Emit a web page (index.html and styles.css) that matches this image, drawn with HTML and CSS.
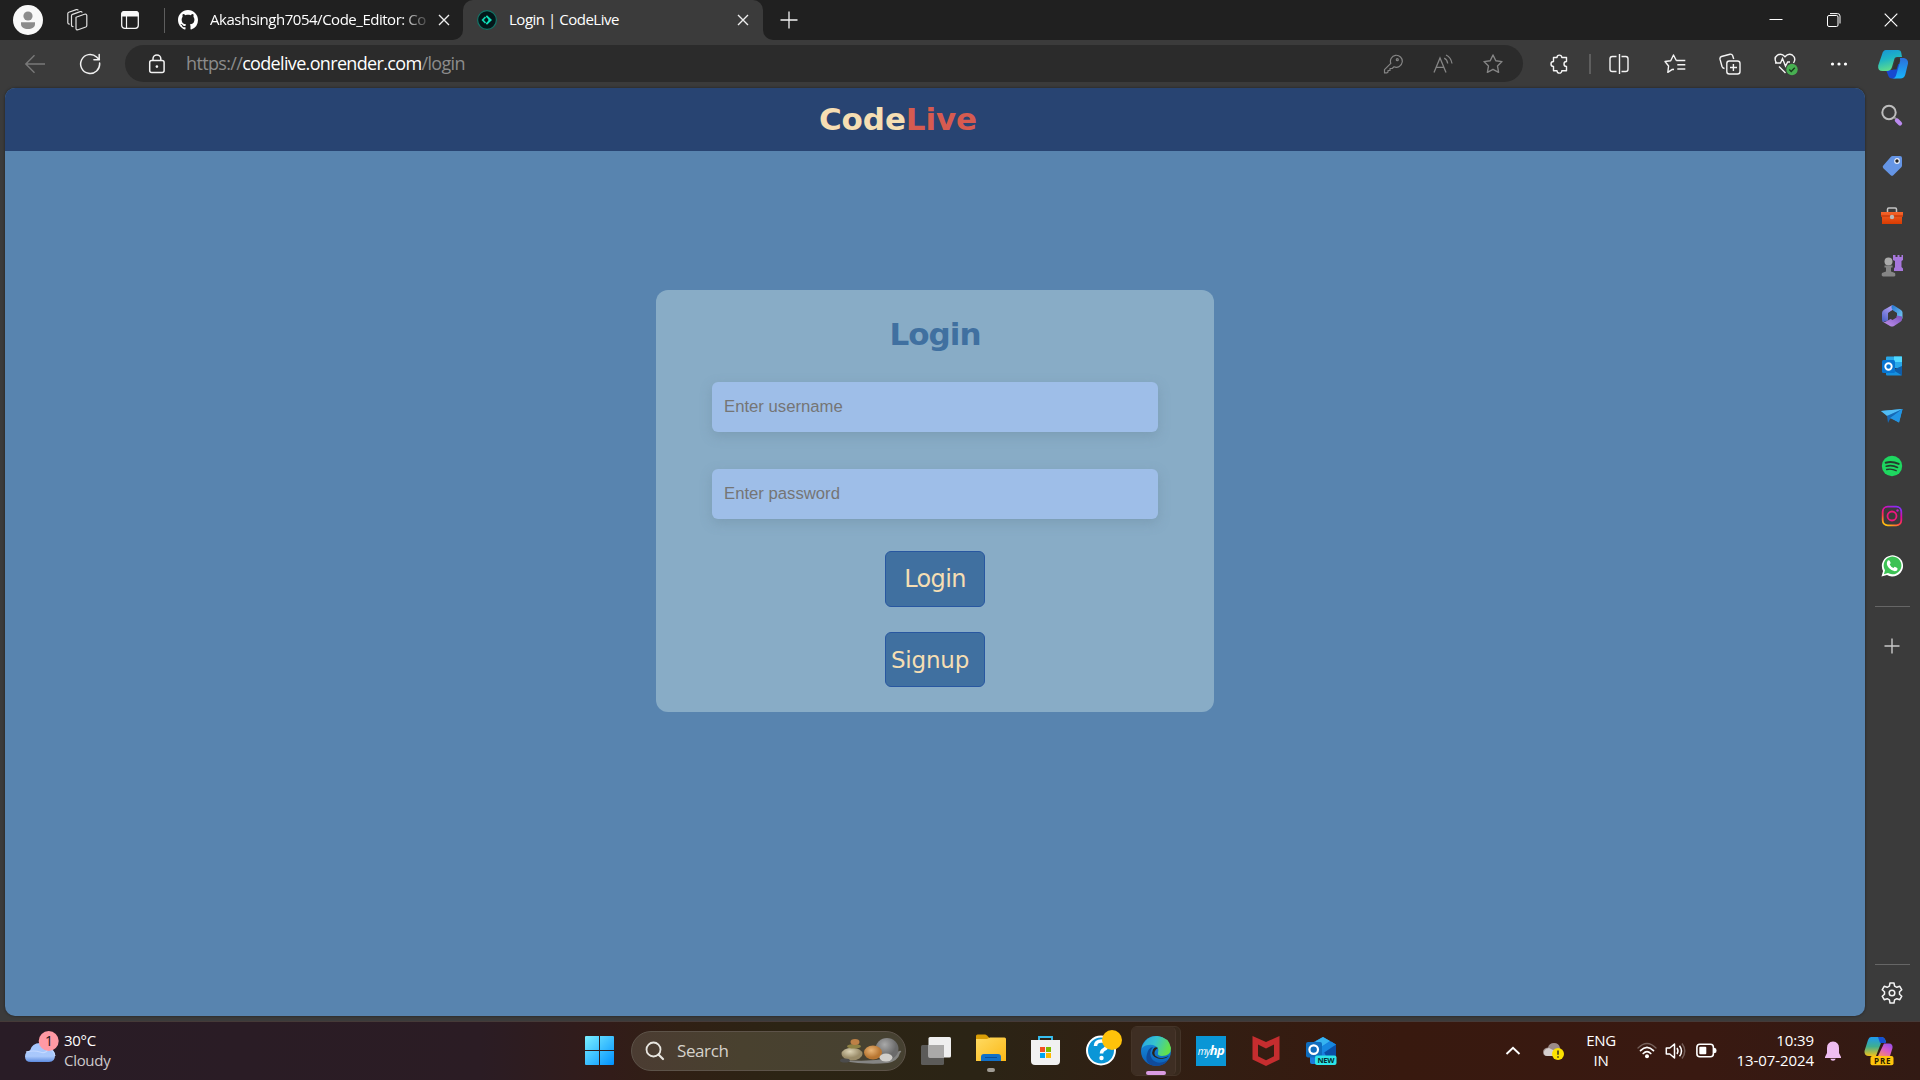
FILE: index.html
```html
<!DOCTYPE html>
<html lang="en">
<head>
<meta charset="utf-8">
<title>Login | CodeLive</title>
<link rel="stylesheet" href="styles.css">
</head>
<body>
<svg class="defs" width="0" height="0">
  <defs>
    <linearGradient id="gTeal" x1="0" y1="0" x2="0.3" y2="1"><stop offset="0" stop-color="#1793d8"/><stop offset=".5" stop-color="#1fb5c4"/><stop offset="1" stop-color="#5fdc8c"/></linearGradient>
    <linearGradient id="gBlue" x1="0" y1="0" x2="0" y2="1"><stop offset="0" stop-color="#2b6fdc"/><stop offset="1" stop-color="#18b4fa"/></linearGradient>
    <linearGradient id="gWin" x1="0" y1="0" x2="1" y2="1"><stop offset="0" stop-color="#7aefff"/><stop offset="1" stop-color="#0091ff"/></linearGradient>
    <linearGradient id="gFolder" x1="0" y1="0" x2="1" y2="1"><stop offset="0" stop-color="#ffdb62"/><stop offset="1" stop-color="#fbb817"/></linearGradient>
    <linearGradient id="gCloud" x1="0" y1="0" x2="0" y2="1"><stop offset="0" stop-color="#a5c6ff"/><stop offset=".7" stop-color="#a9c8fb"/><stop offset="1" stop-color="#5d8be0"/></linearGradient>
    <linearGradient id="gEdge" x1="0" y1="0" x2="1" y2="0.3"><stop offset="0" stop-color="#2aa5e0"/><stop offset=".5" stop-color="#35c3cf"/><stop offset="1" stop-color="#62e04d"/></linearGradient>
    <linearGradient id="gEdgeB" x1="0" y1="0" x2="0" y2="1"><stop offset="0" stop-color="#1a93df"/><stop offset="1" stop-color="#0b5fb9"/></linearGradient>
    <linearGradient id="gInsta" x1="0.2" y1="1" x2="0.7" y2="0"><stop offset="0" stop-color="#ffc20e"/><stop offset=".35" stop-color="#ff3a4a"/><stop offset=".65" stop-color="#e5089c"/><stop offset="1" stop-color="#8a2cf5"/></linearGradient>
    <linearGradient id="gOffA" x1="0.7" y1="0" x2="0.2" y2="1"><stop offset="0" stop-color="#b8a2f6"/><stop offset="1" stop-color="#4c62c6"/></linearGradient>
    <linearGradient id="gOffB" x1="0" y1="0" x2="1" y2="1"><stop offset="0" stop-color="#2372d0"/><stop offset="1" stop-color="#79cdf5"/></linearGradient>
    <linearGradient id="gOffC" x1="0" y1="1" x2="1" y2="0"><stop offset="0" stop-color="#c497f0"/><stop offset="1" stop-color="#7a50bd"/></linearGradient>
    <linearGradient id="gPreA" x1="0" y1="0" x2="0" y2="1"><stop offset="0" stop-color="#1e9af0"/><stop offset=".5" stop-color="#3fae8f"/><stop offset="1" stop-color="#f2c21a"/></linearGradient>
    <linearGradient id="gPreB" x1="0.8" y1="0" x2="0.2" y2="1"><stop offset="0" stop-color="#9a50e8"/><stop offset=".5" stop-color="#d85bc8"/><stop offset="1" stop-color="#f58a6a"/></linearGradient>
    <linearGradient id="gRed" x1="0" y1="0" x2="0" y2="1"><stop offset="0" stop-color="#f5642b"/><stop offset="1" stop-color="#d83b01"/></linearGradient>
    <radialGradient id="gStone" cx=".4" cy=".3"><stop offset="0" stop-color="#dcd3b5"/><stop offset="1" stop-color="#9a8c69"/></radialGradient>
    <radialGradient id="gStoneO" cx=".4" cy=".35"><stop offset="0" stop-color="#e9b474"/><stop offset="1" stop-color="#b87632"/></radialGradient>
    <radialGradient id="gStoneG" cx=".4" cy=".3"><stop offset="0" stop-color="#a9a9a9"/><stop offset="1" stop-color="#6b6b6b"/></radialGradient>
  </defs>
</svg>

<div class="screen">
  <header class="titlebar">
    <div class="tabs-left">
      <svg class="profile" width="32" height="32" viewBox="0 0 32 32"><circle cx="16" cy="16" r="15" fill="#f9f9f9"/><circle cx="16" cy="12" r="4.600" fill="#8c8c8c"/><path d="M9 18.200h14v1.800c0 3.200-3 5-7 5s-7-1.800-7-5z" fill="#8c8c8c"/></svg>
      <svg class="workspaces" width="24" height="24" viewBox="0 0 24 24" fill="none" stroke="#e0e0e0" stroke-width="1.200" stroke-linejoin="round"><path d="M11 9.200l8.500-3q2-.600 2.300 1.200v10.200q0 1-1 1.400l-7.700 2.700q-2 .500-2.100-1.200z"/><path d="M8.500 18.500q-1.800.300-2-1.200V7.800q0-1 1-1.400l7.700-2.800q1.500-.400 2 1"/><path d="M4.800 16q-1.700.300-2-1.200V5.600q0-1 1-1.400l7.500-2.600q1.300-.400 2 .800"/></svg>
      <svg class="tabaction" width="20" height="20" viewBox="0 0 20 20"><rect x="1.700" y="1.700" width="16.600" height="16.600" rx="3" fill="none" stroke="#f4f4f4" stroke-width="1.300"/><path d="M1.200 6.500V4a3 3 0 0 1 3-3h11.600a3 3 0 0 1 3 3v2.500z" fill="#f7f7f7"/><path d="M6.500 6v12" stroke="#f4f4f4" stroke-width="1.200"/></svg>
      <i class="rule"></i>
      <div class="tab">
        <svg width="20" height="20" viewBox="0 0 16 16" fill="#fff"><path d="M8 0C3.580 0 0 3.580 0 8c0 3.540 2.290 6.530 5.470 7.590.400.070.550-.170.550-.380 0-.190-.010-.820-.010-1.490-2.010.370-2.530-.490-2.690-.940-.090-.230-.480-.940-.820-1.130-.280-.150-.680-.520-.010-.530.630-.010 1.080.580 1.230.820.720 1.210 1.870.870 2.330.660.070-.520.280-.870.510-1.070-1.780-.200-3.640-.890-3.640-3.950 0-.870.310-1.590.820-2.150-.080-.200-.360-1.020.080-2.120 0 0 .670-.210 2.200.820.640-.180 1.320-.270 2-.270s1.360.090 2 .270c1.530-1.040 2.200-.820 2.200-.820.440 1.100.160 1.920.080 2.120.510.560.820 1.270.820 2.150 0 3.070-1.870 3.750-3.650 3.950.290.250.540.730.540 1.480 0 1.070-.010 1.930-.010 2.200 0 .210.150.460.550.380A8.010 8.010 0 0 0 16 8c0-4.420-3.580-8-8-8z"/></svg>
        <span class="tab-text faded">Akashsingh7054/Code_Editor: Co</span>
        <svg class="x" width="12" height="12" viewBox="0 0 12 12" stroke="#eee" stroke-width="1.400"><path d="M1 1l10 10M11 1L1 11"/></svg>
      </div>
    </div>
    <div class="active-wrap">
      <div class="tab active">
        <svg width="20" height="20" viewBox="0 0 20 20"><circle cx="10" cy="10" r="9.400" fill="#03171a" stroke="#137467" stroke-width="1.200"/><path d="M8.500 7L5.700 10l2.800 3" fill="none" stroke="#10d3b0" stroke-width="1.800"/><path d="M10 5.300l5 4.700-5 4.700-1.300-1.300L11.300 10.800V9.200L8.700 6.600z" fill="#10e0ba"/></svg>
        <span class="tab-text">Login | CodeLive</span>
        <svg class="x" width="12" height="12" viewBox="0 0 12 12" stroke="#eee" stroke-width="1.400"><path d="M1 1l10 10M11 1L1 11"/></svg>
      </div>
    </div>
    <div class="tabs-right">
      <svg width="18" height="18" viewBox="0 0 18 18" stroke="#f2f2f2" stroke-width="1.300"><path d="M9 .5v17M.5 9h17"/></svg>
      <div class="win-controls">
        <svg width="14" height="14" viewBox="0 0 14 14"><path d="M.5 6.500h13" stroke="#fff"/></svg>
        <svg width="14" height="14" viewBox="0 0 14 14" fill="none" stroke="#fff"><rect x=".5" y="2.500" width="10.500" height="11" rx="1.500"/><path d="M3 .600h7.500a2.500 2.500 0 0 1 2.500 2.500V10.500"/></svg>
        <svg width="14" height="14" viewBox="0 0 14 14"><path d="M.7.700l12.600 12.600M13.300.700L.700 13.300" stroke="#fff" stroke-width="1.200"/></svg>
      </div>
    </div>
  </header>

  <div class="toolbar">
    <svg class="back" width="22" height="20" viewBox="0 0 22 20" fill="none" stroke="#797979" stroke-width="1.400"><path d="M21 10H2M10.500 1.300L1.800 10l8.700 8.700"/></svg>
    <svg class="reload" width="22" height="22" viewBox="0 0 22 22" fill="none" stroke="#f0f0f0" stroke-width="1.500" stroke-linecap="round"><path d="M20.600 10a9.500 9.500 0 1 1-3-6l2.700 2.700M20.200 1.500v5.300h-5.300"/></svg>
    <div class="address">
      <svg class="lock" width="18" height="20" viewBox="0 0 18 20" fill="none" stroke="#f2f2f2" stroke-width="1.500"><rect x="1.700" y="6.600" width="14.400" height="12" rx="2"/><path d="M5 6.500V4.800a3.900 3.900 0 0 1 7.800 0v1.700"/><circle cx="8.900" cy="12.600" r="1.300" fill="#f2f2f2" stroke="none"/></svg>
      <span class="url"><span class="dim">https://</span>codelive.onrender.com<span class="dim">/login</span></span>
      <div class="addr-icons">
        <svg width="20" height="20" viewBox="0 0 20 20" fill="none" stroke="#858585" stroke-width="1.200" stroke-linejoin="round"><path d="M12.500 1.300a6 6 0 1 1-1.500 11.500l-1.800 1.700H7v2H5V18l-1 .9H1.500v-3.200L7.800 9.300A6 6 0 0 1 12.500 1.300z"/><circle cx="14.300" cy="5.700" r="1"/></svg>
        <svg width="20" height="20" viewBox="0 0 20 20" fill="none" stroke="#858585" stroke-width="1.300"><path d="M1 18.500L7 4l6 14.500M3.200 13.300h7.700M11.200 4.200q3 1.500 3.500 5.300M13 1q5 2.300 6 8.500"/></svg>
        <svg width="20" height="20" viewBox="0 0 20 20" fill="none" stroke="#858585" stroke-width="1.400" stroke-linejoin="round"><path d="M10 1l2.800 5.700 6.200.9-4.500 4.400 1.100 6.300L10 15.300l-5.600 3 1.100-6.300L1 7.600l6.200-.900z"/></svg>
      </div>
    </div>
    <div class="tools">
      <svg width="20" height="20" viewBox="0 0 20 20" fill="none" stroke="#f4f4f4" stroke-width="1.400" stroke-linejoin="round"><path d="M4.500 3.500H8a2.400 2.400 0 1 1 4.800 0h4.700v4a2.500 2.500 0 1 0 0 5v4.200h-4.700a2.400 2.400 0 1 1-4.800 0H4.500v-4.200a2.500 2.500 0 1 1 0-5z"/></svg>
      <i class="rule"></i>
      <svg class="split" width="20" height="20" viewBox="0 0 20 20" fill="none" stroke="#f4f4f4" stroke-width="1.400"><path d="M7.500 2.500H3.300q-2.300 0-2.300 2.300v10.400q0 2.300 2.300 2.300h4.200M10.500 0v20M12.500 2.500h4.200q2.300 0 2.300 2.300v10.400q0 2.300-2.300 2.300h-4.200"/></svg>
      <svg width="22" height="20" viewBox="0 0 22 20" fill="none" stroke="#f4f4f4" stroke-width="1.400" stroke-linejoin="round"><path d="M8.300 15.300l-4.500 3 .8-6.300L1 7.500l5.700-.8L9.500 1l2.800 5.500M12.300 6.500h9M13.300 10.800h8M13.300 15h8M10 15.500l-1.700-.200M12.300 6.500h3"/></svg>
      <svg width="22" height="22" viewBox="0 0 22 22" fill="none" stroke="#f4f4f4" stroke-width="1.400"><rect x="7.800" y="8" width="13.200" height="13" rx="2.500"/><path d="M14.400 11v7M11 14.500h7M5.500 15.500q-1.800-.200-2.500-2L1 6.200q-.300-2 1.500-2.700l8.500-2.300q2-.300 2.700 1.500l1 3.300"/></svg>
      <svg width="24" height="24" viewBox="0 0 24 24" fill="none" stroke="#f4f4f4" stroke-width="1.400"><path d="M2.500 11Q-.700 6 3.500 3.200 7.500.800 11 4.700q3.500-3.900 7.500-1.500 4 2.900 1 7.800M1 11h5.500l2-4.500 3 7.500 2.200-4H16M5 14.500l6.500 6.500"/><circle cx="18" cy="17.500" r="5.700" fill="#48b052" stroke="none"/><path d="M15.300 17.600l1.900 1.900 3.600-3.800" stroke="#173d1b"/></svg>
      <svg class="dots" width="18" height="6" viewBox="0 0 18 6" fill="#fff"><circle cx="2.500" cy="3" r="1.600"/><circle cx="9" cy="3" r="1.600"/><circle cx="15.500" cy="3" r="1.600"/></svg>
      <svg class="copilot" width="32" height="30" viewBox="0 0 32 30"><path d="M9 21h7l2-6h7l-3 10q-1 4.500-4 4.500h-3q-3 0-4-3.500z" fill="#1749cf"/><path d="M9 1h12q3 0 3.300 3l.7 4h-5q-2 0-2.500 1.500L15 18q-1.200 4-5 4H5.500q-5 0-4.300-5.500L5 5.500Q6 1 9 1z" fill="url(#gTeal)"/><path d="M23 9h4q4.500 1 4 5.500l-2.700 11q-1 4-5 4H15q3 0 4-3l3.200-11Q23.700 11.500 23 9z" fill="url(#gBlue)"/><path d="M19 9.500h4l-3.500 11h-4z" fill="#333"/></svg>
    </div>
  </div>

  <div class="browser-body">
    <main class="page">
      <nav class="brand"><span>Code</span><span class="live">Live</span></nav>
      <section class="stage">
        <form class="card">
          <h1>Login</h1>
          <input type="text" placeholder="Enter username">
          <input type="password" placeholder="Enter password">
          <button type="button" class="login">Login</button>
          <button type="button" class="signup">Signup</button>
        </form>
      </section>
    </main>
    <aside class="sidebar">
      <div class="apps">
        <svg viewBox="0 0 24 24"><path d="M14.500 13.500l3 3" stroke="#888" stroke-width="2"/><path d="M17 16.500l3 3" stroke="#bb8af0" stroke-width="4.300" stroke-linecap="round"/><circle cx="9" cy="8.500" r="6.700" fill="none" stroke="#bdbdbd" stroke-width="2"/></svg>
        <svg viewBox="0 0 24 24"><path d="M12.500 2H20q2 0 2 2v7.500q0 1-.700 1.700l-8 8q-1.300 1.300-2.600 0l-7.400-7q-1.300-1.300 0-2.600L10.700 3q.8-1 1.800-1z" fill="#6595e5"/><circle cx="17" cy="7" r="2.300" fill="#222" stroke="#e8eefb" stroke-width="1.200"/></svg>
        <svg viewBox="0 0 24 24"><path d="M7.500 8V5.200q0-1.200 1.200-1.200h6.600q1.200 0 1.200 1.200V8" fill="none" stroke="#c4c4c4" stroke-width="1.500"/><path d="M1 8h22v4.500l-1 .5v7H2v-7l-1-.500z" fill="url(#gRed)"/><path d="M1 12h22" stroke="#b63007"/><circle cx="12" cy="13" r="2.200" fill="#bababa"/></svg>
        <svg viewBox="0 0 24 24"><path d="M13 1h2.500v2h2V1h2v2h2V1H23v5l-1.500 1V13l1.500 1.500V17h-9v-2.500l1-1.500V7L13 6z" fill="#a777dc"/><circle cx="8.500" cy="7.500" r="4" fill="#aaa"/><path d="M4.500 11.500h8v2H11v4l4 1.500q1 3.500-1 3.500H3q-2-.500-1-3.500l4-1.500v-4H4.500z" fill="#858585"/></svg>
        <svg viewBox="0 0 24 24"><path d="M12.500 1L4 5.700Q2 7 2 9v6.500q0 2 1 2.500l5-1.500V9l6-4z" fill="url(#gOffA)"/><path d="M12.500 1q-1.500 1-1 3 .5 2 3 3.500L17 9v3l5 3q.5-.5.5-1.500V8.500q0-1.500-1.500-2.500L14 1.500q-.7-.5-1.500-.5z" fill="url(#gOffB)"/><path d="M2.500 17q1 1.500 3 .8L17 11.500l5 1v3q0 1.500-1.500 2.300L14 22q-2 1-4 0l-6-3.500q-1.300-.700-1.500-1.500z" fill="url(#gOffC)"/><path d="M9 8.500L12.500 6.500 16.500 9v4.500L12.500 16 9 14z" fill="#3b3b3b"/></svg>
        <svg viewBox="0 0 24 24"><path d="M7 2.500h14q1 0 1 1V14H6V3.500q0-1 1-1z" fill="#28a8ea"/><path d="M14 2.500h8V8h-8z" fill="#50d9ff"/><path d="M6 12l8 4 8-4v8.500q0 1-1 1H7q-1 0-1-1z" fill="#1490df"/><path d="M22 12v9.500L13 16z" fill="#0f5da8"/><rect x="2" y="6" width="13" height="13" rx="1.500" fill="#0875d1"/><circle cx="8.500" cy="12.500" r="3.200" fill="none" stroke="#fff" stroke-width="1.900"/></svg>
        <svg viewBox="0 0 24 24"><path d="M1 7l21.500-2L19 18.500 11.500 14z" fill="#2ba2ea"/><path d="M1 7l21.500-2L7 12z" fill="#51bdf5"/><path d="M7 12l15.500-7L10 15l-2 4z" fill="#1769b5"/><path d="M10 14l12.500-9L19 18.500z" fill="#2295e5"/></svg>
        <svg viewBox="0 0 24 24"><circle cx="12" cy="12" r="10.200" fill="#1ed760"/><g fill="none" stroke="#263b2d" stroke-linecap="round"><path d="M5.700 8.700q6.500-1.800 13 1.200" stroke-width="2"/><path d="M6.300 12.200q6-1.500 11.200 1.200" stroke-width="1.700"/><path d="M6.700 15.500q5-1.200 9.500 1.200" stroke-width="1.400"/></g></svg>
        <svg viewBox="0 0 24 24"><rect x="2.700" y="2.700" width="18.600" height="18.600" rx="5" fill="none" stroke="url(#gInsta)" stroke-width="1.800"/><circle cx="12" cy="12" r="4.500" fill="none" stroke="#f0177d" stroke-width="1.800"/><circle cx="17.500" cy="6.500" r="1.200" fill="#c41cc9"/></svg>
        <svg viewBox="0 0 24 24"><path d="M1.500 22.500l1.600-5.600A10.600 10.600 0 1 1 7 21z" fill="#fff"/><path d="M3.900 20.200l1.100-4A8.900 8.900 0 1 1 8 19.100z" fill="#3cc254"/><path d="M7.800 6.500q1.200-.800 1.900.3l.9 2q.200.600-.900 1.700 1.300 2.600 3.800 3.600l1.200-1.400 2.600 1.200q.8 2.300-1.700 3.200-3.200.5-6.700-3.100-3.500-3.900-1.100-7.500z" fill="#fff"/></svg>
      </div>
      <i class="side-rule"></i>
      <svg class="add" width="16" height="16" viewBox="0 0 16 16"><path d="M8 .5v15M.5 8h15" stroke="#c9c9c9" stroke-width="1.400"/></svg>
      <i class="side-rule bottom"></i>
      <svg class="gear" width="22" height="22" viewBox="0 0 22 22" fill="none" stroke="#f4f4f4" stroke-width="1.500" stroke-linejoin="round"><path d="M9 1h4l.6 3.100 2.200 1.200 3-1 2 3.500-2.300 2v2.400l2.300 2-2 3.500-3-1-2.200 1.200L13 21H9l-.6-3.100-2.200-1.200-3 1-2-3.500 2.300-2V9.800l-2.300-2 2-3.500 3 1 2.200-1.200z"/><circle cx="11" cy="11" r="2.800"/></svg>
    </aside>
  </div>

  <footer class="taskbar">
    <div class="weather">
      <svg width="36" height="34" viewBox="0 0 36 34"><path d="M8 32q-6 0-6-5.500 0-5 5-6Q9 13 17 13q6 0 9 5 6 1.500 6 7.500 0 6.500-6 6.500z" fill="url(#gCloud)"/><path d="M3 22q8-2 14 0t8-3q6 1 7 7" fill="none" stroke="#c4d9ff" stroke-width="1.200"/><circle cx="25.700" cy="11" r="10" fill="#ff99a4"/><text x="22" y="16" font-family="Open Sans" font-size="14" fill="#1c1418">1</text></svg>
      <div class="weather-text"><span>30°C</span><span class="soft">Cloudy</span></div>
    </div>

    <div class="center">
      <svg width="29" height="29" viewBox="0 0 29 29"><path d="M0 1q0-1 1-1h13v14H0zM15 0h13q1 0 1 1v13H15zM0 15h14v14H1q-1 0-1-1zM15 15h14v13q0 1-1 1H15z" fill="url(#gWin)"/></svg>
      <div class="search">
        <svg width="20" height="20" viewBox="0 0 20 20" fill="none" stroke="#e8e6e0"><circle cx="8.500" cy="8.500" r="7" stroke-width="1.800"/><path d="M13.500 13.500l4.500 4.500" stroke-width="2.200" stroke-linecap="round"/></svg>
        <span>Search</span>
        <svg class="stones" width="62" height="28" viewBox="0 0 62 28"><path d="M2 22.500q24 3 48-1.500l9-7q4-1 1 2-2 8-12 10-22 2-46-2z" fill="#858583"/><ellipse cx="47" cy="12" rx="11.500" ry="11" fill="url(#gStoneG)"/><ellipse cx="12" cy="17" rx="10.500" ry="6.300" fill="url(#gStone)"/><ellipse cx="14" cy="9.300" rx="7" ry="2.300" fill="#8e8144"/><ellipse cx="15" cy="5" rx="4.500" ry="3" fill="#bd8046"/><ellipse cx="33" cy="15.500" rx="9" ry="7" fill="url(#gStoneO)"/><ellipse cx="46" cy="20.500" rx="6.500" ry="4" fill="#d1cfcb"/><ellipse cx="5" cy="23.500" rx="5" ry="2" fill="#4c4c4c"/></svg>
      </div>
      <svg class="taskview" width="30" height="28" viewBox="0 0 30 28"><rect x="0" y="8" width="23" height="20" rx="1.500" fill="#5c5b59"/><rect x="7.500" y="0" width="22.500" height="20.500" rx="1.500" fill="#efefef"/><path d="M7.500 8H23v12.500H7.500z" fill="#aaa9a8"/></svg>
      <svg class="explorer" width="30" height="40" viewBox="0 0 30 40"><path d="M0 2q0-1.500 1.500-1.500H9q1 0 2 1l2.500 2.500v4H0z" fill="#d99e06"/><path d="M0 5h11l3-1.500h14.500Q30 3.500 30 5v22H0z" fill="url(#gFolder)"/><path d="M5 27v-4q0-3 3-3h14q3 0 3 3v4z" fill="#1170c8"/><path d="M9 23.500h12" stroke="#0b4d97"/><rect x="11" y="34" width="8" height="4" rx="2" fill="#a09c94"/></svg>
      <svg class="store" width="29" height="29" viewBox="0 0 29 29"><path d="M8 6V1h13v5" fill="none" stroke="#37bff0" stroke-width="1.900"/><path d="M0 4h29v21q0 4-4 4H4q-4 0-4-4z" fill="#f1f1f1"/><path d="M9 11h5v5H9z" fill="#f25022"/><path d="M15 11h5v5h-5z" fill="#7fba00"/><path d="M9 17h5v5H9z" fill="#00a4ef"/><path d="M15 17h5v5h-5z" fill="#ffb900"/></svg>
      <svg class="help" width="36" height="36" viewBox="0 0 36 36"><circle cx="15" cy="20.500" r="14" fill="#0a96d7" stroke="#fff" stroke-width="2"/><path d="M9.500 16q.2-5 5.700-5 5.800 0 5.800 4.500 0 2.500-3 4-2.500 1.300-2.500 4" fill="none" stroke="#fff" stroke-width="3.500"/><circle cx="15.500" cy="28" r="2.200" fill="#fff"/><circle cx="26" cy="10" r="10" fill="#ffc20a"/></svg>
      <div class="edge-stack"><div class="edge">
        <svg width="30" height="30" viewBox="0 0 30 30"><circle cx="15" cy="15" r="15" fill="url(#gEdgeB)"/><path d="M1 11Q5 0 16 0q12 1 14 12 0 8-9 8-5-.5-4-3 2-6-5-8Q5 8 1 12z" fill="url(#gEdge)"/><path d="M12 11q-5 6-1 12 6 7 16 1-4 6-12 6Q3 29 6 18q1-6 6-7z" fill="#104b9b"/><path d="M17 12q-5 3-3 7.500 5 5 14 .5-4 4-11 2.500Q9 20 12 13.500q2-3.500 5-1.500z" fill="#2b2115"/></svg>
        <i></i>
      </div></div>
      <div class="hp">my<b>hp</b></div>
      <svg class="mcafee" width="28" height="30" viewBox="0 0 28 30"><path d="M.500 0L14 6 27.500 0v23.500L14 30 .500 23.500zM6 8.500v11.700l8 4 8-4V8.500l-8 4z" fill="#c52d2f" fill-rule="evenodd"/></svg>
      <svg class="outlook" width="32" height="30" viewBox="0 0 32 30"><path d="M4 8L17 1l13 7.500V26q0 2-2 2H6q-2 0-2-2z" fill="#1b7cdd"/><path d="M10 5l7-4 7 4-12 8-6 2z" fill="#35b3f0"/><path d="M17 14L30 8.500V20l-9 2z" fill="#0a4ea6"/><path d="M13 12l12-6.500 5 3L16 18z" fill="#1687e0"/><rect x="0" y="6" width="16" height="15.500" rx="2" fill="#0f6cbd"/><circle cx="7.700" cy="13.600" r="4.300" fill="none" stroke="#fff" stroke-width="2.200"/><rect x="9" y="19.500" width="21.500" height="9.500" rx="2" fill="#2de5e9"/><text x="11.500" y="27" font-family="Open Sans" font-weight="700" font-size="7.500" textLength="17" fill="#052b2e">NEW</text></svg>
    </div>

    <div class="tray">
      <svg class="chev" width="16" height="10" viewBox="0 0 16 10" fill="none" stroke="#fff" stroke-width="1.900"><path d="M1.500 8L8 1.700 14.500 8"/></svg>
      <svg class="drive" width="22" height="20" viewBox="0 0 22 20"><path d="M4 15q-4 0-4-4t5-4.500Q6 2 11 2q5 0 6 5l1 8z" fill="#9b8b88"/><path d="M1 13q-1-5 5-6l10 5v3H4q-2 0-3-2z" fill="#d5cfce"/><circle cx="15" cy="13" r="6" fill="#fce100"/><path d="M15 9.500v4.300M15 15.200v1.500" stroke="#222" stroke-width="1.400"/></svg>
      <div class="lang"><span>ENG</span><span>IN</span></div>
      <svg class="wifi" width="20" height="18" viewBox="0 0 20 18" fill="none" stroke-linecap="round"><path d="M1 6q9-9 18 0" stroke="#75605a" stroke-width="1.300"/><path d="M3.500 8.700q6.500-6.500 13 0M6.200 11.500q3.800-3.700 7.600 0" stroke="#fff" stroke-width="1.700"/><circle cx="10" cy="14.300" r="2" fill="#fff"/></svg>
      <svg class="volume" width="22" height="18" viewBox="0 0 22 18" fill="none" stroke="#fff" stroke-width="1.500" stroke-linejoin="round"><path d="M1.300 6h3.500L9.500 2v14l-4.700-4H1.300z"/><path d="M12 6q2 3 0 6M14.500 3.700q4 5.300 0 10.600"/><path d="M17 1.500q5.500 7.500 0 15" stroke="#735c56"/></svg>
      <svg class="battery" width="21" height="15" viewBox="0 0 21 15"><rect x=".9" y="1.200" width="16.500" height="12.500" rx="3" fill="none" stroke="#fff" stroke-width="1.600"/><rect x="3.300" y="3.700" width="7" height="7.500" rx="1" fill="#fff"/><path d="M18 5h1q1.500 0 1.500 2.500T19 10h-1z" fill="#fff"/></svg>
      <div class="clock"><span>10:39</span><span>13-07-2024</span></div>
      <svg class="bell" width="18" height="20" viewBox="0 0 18 20" fill="#efbdf1"><path d="M9 .5q6 .5 6 6.500v5l2 4v1H1v-1l2-4V7Q3 1 9 .500zM6.300 17.800h5.400q-.5 2-2.700 2t-2.700-2z"/></svg>
      <svg class="pre" width="30" height="30" viewBox="0 0 30 30"><path d="M7 1h10q4 0 5 5l-5 1-5 13H5q-5 0-4.500-5L4 4q1-3 3-3z" fill="url(#gPreA)"/><path d="M14 1h4q3 0 4 6h-6z" fill="#1550d2"/><path d="M20 7.500h5q4 0 3.500 4.500L26 20H14z" fill="url(#gPreB)"/><rect x="6.500" y="20" width="23" height="9.300" rx="2" fill="#ffc40d"/><text x="10" y="27.600" font-family="Open Sans" font-weight="700" font-size="8" textLength="16.500" fill="#2b1d00">PRE</text></svg>
    </div>
  </footer>
</div>
</body>
</html>
```
FILE: styles.css
```css
* { box-sizing: border-box; }
body {
  margin: 0;
  background: #3b3b3b;
  font-family: "Open Sans", sans-serif;
  color: #fff;
}
svg { display: block; flex: none; }
.defs { width: 0; height: 0; float: left; }
.screen {
  width: 1920px;
  height: 1080px;
  display: flex;
  flex-direction: column;
  overflow: hidden;
}

/* window title bar and tabs */
.titlebar { display: flex; height: 40px; flex: none; }
.tabs-left {
  display: flex;
  align-items: center;
  width: 463px;
  padding-left: 12px;
  background: #202020;
  border-bottom-right-radius: 10px;
}
.workspaces { margin-left: 21px; }
.tabaction { margin-left: 31px; }
.rule { width: 1px; height: 25px; background: #5e5e5e; }
.tabs-left .rule { margin-left: 24px; }
.tab { display: flex; align-items: center; flex: 1; padding-left: 13px; }
.tab-text {
  width: 218px;
  margin-left: 12px;
  padding-bottom: 2px;
  font-size: 15px;
  line-height: 36px;
  letter-spacing: -0.48px;
  white-space: nowrap;
  overflow: hidden;
}
.faded { -webkit-mask-image: linear-gradient(90deg, #000 190px, transparent 222px); mask-image: linear-gradient(90deg, #000 190px, transparent 222px); }
.x { margin-left: 10px; }
.active-wrap { width: 300px; background: linear-gradient(#202020 20px, #3b3b3b 20px); }
.active { height: 40px; background: #3b3b3b; border-radius: 10px 10px 0 0; padding-left: 14px; }
.tabs-right {
  flex: 1;
  display: flex;
  align-items: center;
  justify-content: space-between;
  padding: 0 22px 0 17px;
  background: #202020;
  border-bottom-left-radius: 10px;
}
.win-controls { display: flex; gap: 43.500px; }

/* navigation toolbar */
.toolbar { display: flex; align-items: center; height: 48px; flex: none; padding: 0 11px 1px 24px; }
.reload { margin-left: 33px; }
.address {
  display: flex;
  align-items: center;
  width: 1398px;
  height: 37px;
  margin-left: 24px;
  padding: 0 20px 0 23px;
  border-radius: 19px;
  background: #2b2b2b;
}
.url { margin-left: 20px; padding-bottom: 1px; font-size: 18px; letter-spacing: -0.66px; line-height: 35px; white-space: nowrap; }
.dim { color: #8b8b8b; }
.addr-icons { display: flex; gap: 30px; margin-left: auto; }
.tools { display: flex; align-items: center; flex: 1; margin-left: 26px; }
.tools .rule { width: 2px; height: 20px; margin: 0 18px 0 20px; }
.tools .split { margin-right: 35px; }
.tools .split ~ svg { margin-right: 33px; }
.tools svg.dots { margin: 0 0 0 -1px; }
.tools svg.copilot { margin: 0 0 0 auto; }

/* page viewport */
.browser-body { display: flex; height: 933px; flex: none; padding: 0 0 5px 5px; }
.page {
  display: flex;
  flex-direction: column;
  width: 1860px;
  flex: none;
  border-radius: 10px;
  overflow: hidden;
  background: #5884af;
  box-shadow: 0 0 3px rgba(0, 0, 0, .45);
}
.brand {
  display: flex;
  justify-content: center;
  height: 63px;
  flex: none;
  background: #284472;
  color: #f5deb3;
  font: bold 31px/62px "DejaVu Sans", Verdana, sans-serif;
  letter-spacing: -0.1px;
  padding-right: 74px;
}
.live { color: #d65b50; }
.stage { display: flex; justify-content: center; padding-top: 139px; }
.card {
  display: flex;
  flex-direction: column;
  align-items: center;
  width: 558px;
  height: 422px;
  border-radius: 12px;
  background: #88acc6;
}
.card h1 {
  margin: 25px 0 29px;
  color: #4070a0;
  font: bold 31px/38px "DejaVu Sans", Verdana, sans-serif;
  letter-spacing: -1px;
}
.card input {
  width: 446px;
  height: 50px;
  margin-bottom: 37px;
  padding: 0 12px;
  border: 0;
  border-radius: 6px;
  background: #9ebee8;
  box-shadow: 0 4px 12px rgba(100, 130, 150, .35);
  font: 16.700px "Liberation Sans", Arial, sans-serif;
}
.card input::placeholder { color: #757575; opacity: 1; }
.card input + input { margin-bottom: 32px; }
.card button {
  width: 100px;
  padding: 0;
  border: 1px solid #2857a0;
  border-radius: 6px;
  background: #4070a0;
  color: #f5deb3;
  font-family: "DejaVu Sans", Verdana, sans-serif;
}
.card .login { height: 56px; font-size: 24px; letter-spacing: -0.6px; margin-bottom: 25px; }
.card .signup { height: 55px; font-size: 23px; letter-spacing: -0.2px; padding-right: 10px; }

/* browser sidebar */
.sidebar { display: flex; flex-direction: column; align-items: center; width: 55px; padding-right: 1px; }
.apps { display: flex; flex-direction: column; gap: 26px; padding-top: 16px; }
.apps svg { width: 24px; height: 24px; }
.side-rule { width: 35px; height: 1px; margin-top: 28px; background: #666; }
.add { margin-top: 31px; }
.side-rule.bottom { margin-top: auto; }
.gear { margin: 17px 0 12px; }

/* system taskbar */
.taskbar {
  display: flex;
  align-items: center;
  height: 59px;
  padding-bottom: 1px;
  border-top: 1px solid #453a38;
  background: linear-gradient(90deg, #291c26 0, #2b1c24 480px, #321c19 610px, #302014 680px, #2c2414 780px, #2b2415 980px, #311f13 1160px, #38190f 1400px, #391911 1700px, #321a14 1920px);
}
.weather { display: flex; align-items: center; width: 585px; padding: 0 0 2px 23px; height: 57px; }
.weather svg { margin-top: -6px; }
.weather-text, .clock, .lang { display: flex; flex-direction: column; font-size: 15px; line-height: 20px; letter-spacing: -0.3px; }
.weather-text { margin-left: 5px; }
.soft { color: #cdc9cb; }
.center { display: flex; align-items: center; width: 920px; height: 57px; }
.search {
  display: flex;
  align-items: center;
  width: 275px;
  height: 40px;
  margin-left: 17px;
  padding: 0 3px 0 13px;
  border: 1px solid #5d5349;
  border-radius: 20px;
  background: linear-gradient(90deg, #4b3c32, #49412f 40%, #464131);
  color: #d6d2cb;
  font-size: 17px;
}
.search span { margin-left: 12px; padding-bottom: 1px; letter-spacing: -0.4px; }
.stones { margin-left: auto; }
.taskview { margin-left: 15px; }
.explorer { margin: 7px 0 0 25px; }
.store { margin-left: 25px; }
.help { margin: -6px 0 0 26px; }
.edge-stack {
  width: 50px;
  height: 50px;
  margin-left: 9px;
  border: 1px solid #443428;
  border-radius: 6px;
  background: #37291d;
}
.edge {
  display: flex;
  flex-direction: column;
  align-items: center;
  width: 44px;
  height: 48px;
  padding: 9px 0 0 5px;
  border-right: 1px solid #49382d;
  border-radius: 5px;
  background: #3e2e23;
}
.edge i { width: 20px; height: 4px; margin-top: 5px; border-radius: 2px; background: #d99be2; }
.hp {
  width: 30px;
  height: 30px;
  margin-left: 15px;
  background: #0a96d6;
  font: italic 10px/28px "Open Sans", sans-serif;
  letter-spacing: -0.6px;
  text-align: center;
}
.hp b { font-size: 13px; }
.mcafee { margin-left: 26px; }
.outlook { margin-left: 26px; }
.tray { display: flex; align-items: center; height: 57px; }
.drive { margin-left: 22px; }
.lang { width: 60px; margin: 0 0 1px 6px; align-items: center; }
.wifi { margin-left: 6px; }
.volume { margin-left: 8px; }
.battery { margin-left: 9px; }
.clock { width: 97px; margin-bottom: 2px; align-items: flex-end; letter-spacing: -0.08px; }
.bell { margin-left: 10px; }
.pre { margin-left: 22px; }
```
